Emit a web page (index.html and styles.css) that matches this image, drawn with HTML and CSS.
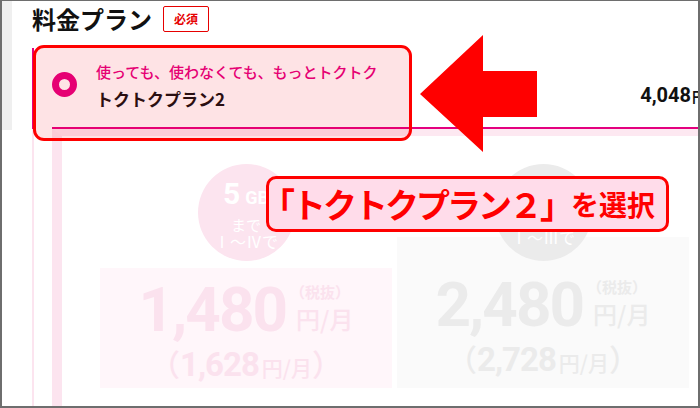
FILE: index.html
```html
<!DOCTYPE html>
<html lang="ja">
<head>
<meta charset="utf-8">
<title>料金プラン</title>
<link rel="stylesheet" href="styles.css">
</head>
<body>
<div class="frame">
  <div class="side"></div>
  <div class="page">
    <div class="title-row">
      <h1 class="title">料金プラン</h1>
      <span class="badge">必須</span>
    </div>
    <div class="plan">
      <div class="plan-head">
        <div class="plan-row">
          <span class="radio"></span>
          <div class="plan-text">
            <p class="catch">使っても、使わなくても、もっとトクトク</p>
            <p class="name">トクトクプラン2</p>
          </div>
          <div class="price">4,048<span class="price-unit">円</span></div>
        </div>
      </div>
      <div class="plan-body">
        <div class="plan-inner">
          <div class="col col-pink">
            <div class="circle">
              <div class="cap">5<small>GB</small></div>
              <div class="until">まで</div>
              <div class="range">Ⅰ～Ⅳで</div>
            </div>
            <div class="box">
              <div class="main">
                <span class="num">1,480</span>
                <div class="unit-stack">
                  <span class="tax">（税抜）</span>
                  <span class="unit">円/月</span>
                </div>
              </div>
              <div class="sub"><span class="paren">（</span><span class="sub-num">1,628</span><span class="sub-unit">円/月</span><span class="paren">）</span></div>
            </div>
          </div>
          <div class="col col-gray">
            <div class="circle">
              <div class="range">Ⅰ～Ⅲで</div>
            </div>
            <div class="box">
              <div class="main">
                <span class="num">2,480</span>
                <div class="unit-stack">
                  <span class="tax">（税抜）</span>
                  <span class="unit">円/月</span>
                </div>
              </div>
              <div class="sub"><span class="paren">（</span><span class="sub-num">2,728</span><span class="sub-unit">円/月</span><span class="paren">）</span></div>
            </div>
          </div>
        </div>
      </div>
    </div>
  </div>

  <div class="highlight"></div>
  <svg class="arrow" viewBox="0 0 118 118" aria-hidden="true">
    <polygon points="0,59 63,0 63,36 117,36 117,82 63,82 63,117" fill="#ff0000"/>
  </svg>
  <div class="callout">
    <span class="callout-main">「トクトクプラン２」</span><span class="callout-tail">を選択</span>
  </div>
</div>
</body>
</html>
```

FILE: styles.css
```css
* {
  box-sizing: border-box;
  margin: 0;
  padding: 0;
}

html,
body {
  width: 700px;
  height: 408px;
  overflow: hidden;
}

body {
  background: #ffffff;
  font-family: "Noto Sans CJK JP", "Noto Sans", sans-serif;
  color: #1a1a1a;
}

.frame {
  position: relative;
  width: 700px;
  height: 408px;
  border: 2px solid #6e6e6e;
  border-top-width: 1px;
  display: flex;
  align-items: flex-start;
  overflow: hidden;
  background: #ffffff;
}

.side {
  flex: none;
  width: 10px;
  height: 129px;
  background: #efefef;
}

.page {
  flex: 1;
  min-width: 0;
  margin-left: 20px;
}

/* title */
.title-row {
  display: flex;
  align-items: center;
  padding-top: 3px;
  margin-bottom: 14px;
}

.title {
  font-size: 24px;
  line-height: 30px;
  font-weight: 700;
  color: #111111;
}

.badge {
  margin-left: 11px;
  padding: 2px 10px;
  font-size: 12px;
  line-height: 20px;
  font-weight: 700;
  color: #e60000;
  border: 1px solid #e60000;
  border-radius: 2px;
}

/* plan row */
.plan-head {
  border-left: 2px solid #e4007f;
  padding-left: 18px;
}

.plan-row {
  display: flex;
  align-items: flex-start;
  padding: 14px 0 17px;
  border-bottom: 2px solid #e4007f;
}

.radio {
  flex: none;
  width: 25px;
  height: 25px;
  margin-top: 10px;
  border-radius: 50%;
  border: 7px solid #e4007f;
  background: #ffffff;
}

.plan-text {
  margin-left: 19px;
}

.catch {
  font-size: 15px;
  line-height: 20px;
  font-weight: 500;
  color: #e4007f;
}

.name {
  margin-top: 6px;
  font-size: 17px;
  line-height: 22px;
  font-weight: 700;
  color: #111111;
}

.price {
  margin-left: auto;
  margin-right: -8px;
  margin-top: 21px;
  font-family: Roboto, "Noto Sans CJK JP", sans-serif;
  font-weight: 700;
  font-size: 20px;
  line-height: 24px;
  color: #111111;
  white-space: nowrap;
}

.price-unit {
  font-family: "Noto Sans CJK JP", sans-serif;
  font-size: 14px;
  margin-left: 1px;
}

/* plan body */
.plan-body {
  height: 277px;
  border-left: 2px solid #fce4ef;
  padding-left: 18px;
}

.plan-inner {
  height: 100%;
  border-left: 10px solid #fce4ef;
  border-top: 7px solid #fde8f1;
  padding: 28px 0 0 38px;
  display: grid;
  grid-template-columns: 292px 292px;
  column-gap: 5px;
  align-items: start;
}

.col {
  display: flex;
  flex-direction: column;
  align-items: center;
}

.circle {
  position: relative;
  z-index: 1;
  width: 97px;
  height: 97px;
  border-radius: 50%;
  padding-top: 16px;
  display: flex;
  flex-direction: column;
  align-items: center;
  color: #ffffff;
}

.col-pink .circle {
  background: #fce4ef;
}

.col-gray .circle {
  background: #ebebeb;
  padding-top: 65px;
}

.cap {
  font-family: Roboto, "Noto Sans CJK JP", sans-serif;
  font-weight: 700;
  font-size: 30px;
  line-height: 28px;
}

.cap small {
  margin-left: 5px;
  font-size: 18px;
}

.until {
  margin-top: 5px;
  font-size: 15px;
  line-height: 16px;
}

.range {
  font-size: 16px;
  line-height: 16px;
}

.box {
  align-self: stretch;
  display: flex;
  flex-direction: column;
  align-items: center;
}

.col-pink .box {
  margin-top: 7px;
  height: 120px;
  padding-top: 11px;
  background: #fff6fa;
  color: #fbe2ee;
}

.col-gray .box {
  margin-top: -24px;
  height: 151px;
  padding-top: 37px;
  background: #fafafa;
  color: #ebebeb;
}

.main {
  display: flex;
  align-items: flex-end;
}

.num {
  font-family: Roboto, sans-serif;
  font-weight: 700;
  font-size: 62px;
  line-height: 62px;
  letter-spacing: -2px;
}

.unit-stack {
  display: flex;
  flex-direction: column;
  margin-left: 10px;
  margin-bottom: 7px;
}

.tax {
  margin-left: -6px;
  font-size: 15px;
  line-height: 18px;
  font-weight: 700;
}

.unit {
  margin-top: 3px;
  font-size: 24px;
  line-height: 30px;
  font-weight: 500;
}

.sub {
  margin-top: 4px;
  line-height: 36px;
  white-space: nowrap;
}

.paren {
  font-size: 30px;
  font-weight: 500;
}

.sub-num {
  font-family: Roboto, sans-serif;
  font-weight: 700;
  font-size: 33px;
  letter-spacing: -1px;
}

.sub-unit {
  margin-left: 3px;
  font-size: 21px;
  font-weight: 500;
}

/* annotations */
.highlight {
  position: absolute;
  z-index: 2;
  left: 31px;
  top: 44px;
  width: 379px;
  height: 96px;
  border: 3px solid #ff0000;
  border-radius: 11px;
  background: rgba(250, 0, 20, 0.11);
}

.arrow {
  position: absolute;
  z-index: 2;
  left: 418px;
  top: 34px;
  width: 118px;
  height: 118px;
}

.callout {
  position: absolute;
  z-index: 2;
  left: 264px;
  top: 175px;
  width: 403px;
  height: 56px;
  border: 3px solid #ff0000;
  border-radius: 10px;
  background: #ffdcea;
  display: flex;
  align-items: center;
  justify-content: flex-start;
  color: #ff0000;
  font-weight: 700;
  white-space: nowrap;
}

.callout-main {
  margin-left: -8px;
  font-size: 34px;
  line-height: 40px;
  letter-spacing: -3px;
}

.callout-tail {
  margin-left: 0;
  font-size: 28px;
  line-height: 40px;
}
```
